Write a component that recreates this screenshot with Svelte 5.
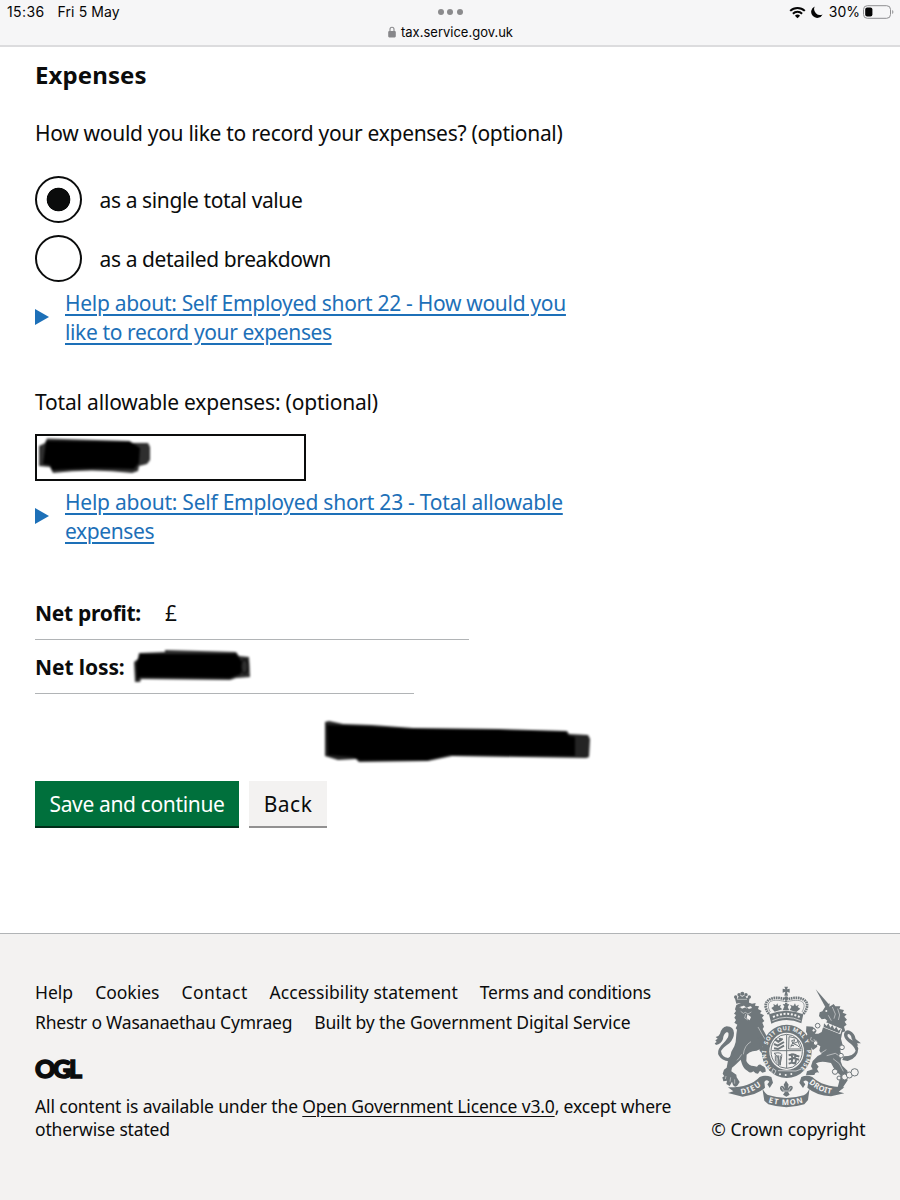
<script lang="ts">
  interface FooterLink {
    id: string;
    text: string;
  }

  const linkRows: FooterLink[][] = [
    [
      { id: 'to-help', text: 'Help' },
      { id: 'to-cookies', text: 'Cookies' },
      { id: 'to-contact', text: 'Contact' },
      { id: 'to-accessibility', text: 'Accessibility statement' },
      { id: 'to-terms', text: 'Terms and conditions' },
    ],
    [
      { id: 'to-welsh', text: 'Rhestr o Wasanaethau Cymraeg' },
      { id: 'to-gds', text: 'Built by the Government Digital Service' },
    ],
  ];

  const options = [
    { value: 'total', label: 'as a single total value' },
    { value: 'detail', label: 'as a detailed breakdown' },
  ];
  let selected = $state('total');
</script>

<div class="screen">
  <header class="chrome">
    <div class="clock"><span>15:36</span><span>Fri 5 May</span></div>
    <div class="address">
      <div class="dots"><i></i><i></i><i></i></div>
      <div class="host">
        <svg width="8" height="12" viewBox="0 0 8 12" aria-hidden="true">
          <path d="M2 6V3.2a2 2 0 0 1 4 0V6" fill="none" stroke="#87878a" stroke-width="1.1" />
          <rect x="0.2" y="5" width="7.6" height="6.4" rx="1.1" fill="#87878a" />
        </svg>
        <span>tax.service.gov.uk</span>
      </div>
    </div>
    <div class="status">
      <svg width="17" height="13" viewBox="0 0 17 13" aria-hidden="true">
        <g fill="none" stroke="#050505" stroke-width="2">
          <path d="M1.2 4.9a10.4 10.4 0 0 1 14.6 0" />
          <path d="M3.9 7.7a6.5 6.5 0 0 1 9.2 0" />
        </g>
        <path d="M8.5 12.2 5.9 9.7a3.8 3.8 0 0 1 5.2 0z" fill="#050505" />
      </svg>
      <svg class="moon" width="12" height="12" viewBox="0 0 12 12" aria-hidden="true">
        <path d="M3.7.4a6 6 0 1 0 7.900 8A6 6 0 0 1 3.700.4z" fill="#050505" />
      </svg>
      <span>30%</span>
      <svg class="battery" width="31" height="14" viewBox="0 0 31 14" aria-hidden="true">
        <rect x="0.5" y="0.7" width="27" height="12.6" rx="3.8" fill="none" stroke="#8e8e90" />
        <rect x="2.2" y="2.4" width="7.2" height="9.2" rx="2" fill="#050505" />
        <path d="M29 5v4q1.5-.6 1.5-2T29 5z" fill="#a4a4a6" />
      </svg>
    </div>
  </header>

  <main>
    <h1>Expenses</h1>
    <p class="question">How would you like to record your expenses? (optional)</p>

    <div class="radios">
      {#each options as option (option.value)}
        <label class="radio">
          <input type="radio" name="expenses" value={option.value} bind:group={selected} />
          <span>{option.label}</span>
        </label>
      {/each}
    </div>

    <div class="help">
      <svg width="14" height="16" viewBox="0 0 14 16" aria-hidden="true"><path d="M0 0 14 8 0 16z" fill="#1d70b8" /></svg>
      <a href="#help-22">Help about: Self Employed short 22 - How would you<br /><span class="tail">like to record your expenses</span></a>
    </div>

    <p class="total-label">Total allowable expenses: (optional)</p>
    <div class="amount">
      <input type="text" aria-label="Total allowable expenses" />
      <svg class="scribble amount-mark" width="120" height="42" viewBox="0 0 120 42" aria-hidden="true">
        <path d="M3 12 9 9 11 4.500 94 7 95 9 112 9 114 13 114 26 111 30 103 32 102 37 96 39Q55 34 17 39L14 33 3 32Z" opacity="0.82" />
        <path d="M10 7 95 8 104 14 103 29 98 35Q55 33 16 36L14 31 7 30Z" />
      </svg>
    </div>

    <div class="help second">
      <svg width="14" height="16" viewBox="0 0 14 16" aria-hidden="true"><path d="M0 0 14 8 0 16z" fill="#1d70b8" /></svg>
      <a href="#help-23">Help about: Self Employed short 23 - Total allowable<br /><span class="tail">expenses</span></a>
    </div>

    <div class="net profit"><strong>Net profit:</strong><span>£</span></div>
    <div class="net loss">
      <strong>Net loss:</strong>
      <svg class="scribble loss-mark" width="120" height="36" viewBox="0 0 120 36" aria-hidden="true">
        <path d="M2 14 6 11 7 5 33 4 33 2 104 4 107 8 117 9 118 29 104 30 98 32 9 31 8 34 3 34Z" opacity="0.82" />
        <path d="M8 6 104 6 107 10 109 12 109 26 98 30 8 29 5 32 4 16Z" />
        <ellipse cx="112.600" cy="18.500" rx="3.600" ry="7" fill="none" stroke="#000" stroke-width="1.200" />
      </svg>
    </div>

    <div class="actions">
      <button class="save">Save and continue</button>
      <button class="back">Back</button>
      <svg class="scribble wide-mark" width="272" height="46" viewBox="0 0 272 46" aria-hidden="true">
        <path d="M2 3 6 2 20 5 49 6 90 9 176 10 244 12 246 15 265 16 267 20 266 38 263 39 129 37 105 42 36 43 33 40 15 41 2 37Z" opacity="0.86" />
        <path d="M4 6 30 7 90 10 176 11 242 13 246 17 252 18 252 37 126 36 104 41 37 41 30 38 5 36Z" />
      </svg>
    </div>
  </main>

  <footer>
    <div class="meta">
      {#each linkRows as row}
        <ul class="links">
          {#each row as link (link.id)}
            <li class={link.id}>{link.text}</li>
          {/each}
        </ul>
      {/each}
      <div class="ogl">OGL</div>
      <p class="licence">
        All content is available under the <a href="#ogl">Open Government Licence v3.0</a>, except where<br />otherwise stated
      </p>
    </div>

    <div class="crown">
      <!-- Royal coat of arms -->
      <svg width="153" height="125" viewBox="36 35 459 375" aria-hidden="true">
        <defs>
          <path id="garter" d="M203 212A60 62 0 0 1 320 222" />
          <path id="garter-left" d="M215 281A60 62 0 0 1 201 219" />
          <path id="garter-right" d="M320 227A60 62 0 0 1 296 286" />
          <path id="scroll-l" d="M124 360Q158 356 190 329" />
          <path id="scroll-m" d="M205 384Q258 400 313 384" />
          <path id="scroll-r" d="M326 326Q356 354 396 359" />
        </defs>

        <!-- lion -->
        <g fill="#6f777b">
          <path d="M109 88 104 69 113 73 117 63 127 67 135 63 140 72 149 67 146 91Q127 83 109 88Z" />
          <circle cx="107" cy="68" r="5" /><circle cx="117" cy="61" r="5" /><circle cx="127" cy="58" r="6" /><circle cx="138" cy="61" r="5" /><circle cx="148" cy="68" r="5" />
          <path d="M109 92Q132 78 156 88L167 86 165 94 177 96 174 104 185 110 180 117 192 123 186 130 193 140 187 145 192 157 188 164Q198 180 204 195L200 211Q188 211 181 224Q170 231 158 231Q148 234 140 241L139 260Q146 275 161 275L171 277Q178 266 186 274Q198 277 197 292L187 295 180 289 174 298 167 297 160 291Q151 299 143 290Q131 284 126 269L122 256 105 273 96 280 94 291 109 301 110 309 119 323 113 333Q106 342 99 332L96 322 89 335 79 329 81 319 70 321 67 309 73 306 68 298 72 286 80 280Q81 260 91 244L94 232 103 216 107 203 109 180 111 166 107 162 112 151 103 145 108 137 103 130 108 122 102 118 108 110 105 105Z" />
          <path d="M108 210Q101 241 96 252L87 261Q65 258 57 244Q49 232 63 214Q77 202 84 189Q89 171 79 174Q70 180 69 194Q64 209 48 212L44 207 50 203 46 198 53 193 47 188Q57 186 60 178Q65 159 80 156Q101 157 102 176Q102 193 88 207Q69 220 63 230Q65 248 84 251Q96 246 100 226Z" />
          <path d="M171 190 190 185 207 193 216 206 205 212 190 207 180 200ZM177 207 193 226 199 238 191 242 179 229Z" />
        </g>
        <g fill="none" stroke="#f3f2f1" stroke-width="1.5">
          <path d="M119 99 132 95 139 101 152 97M122 111 130 117 136 114 144 119 154 113M137 119 134 131 144 137M174 158Q185 178 201 204M130 240Q133 213 153 202M111 258Q118 252 125 240M111 75 141 75M92 309 90 322M104 315 104 328M78 305 76 314" />
        </g>
        <path d="M142 120 153 128 149 138 140 132ZM121 98 132 94 137 99 126 103ZM143 99 153 96 156 101 146 104Z" fill="#f3f2f1" />

        <!-- crown -->
        <g fill="#6f777b">
          <path d="M253 37H264L261 45 269 43V55L261 52 264 64H253L256 52 248 55V43L256 45Z" />
          <circle cx="258.5" cy="72" r="6" />
          <path d="M207 120Q259 99 310 120L304 147Q258 126 214 148Z" />
          <path d="M224 112 214 101 222 96 220 89 228 93 232 87 235 95 243 91 240 99 247 105ZM269 107 274 98 270 91 280 95 285 87 288 95 297 91 293 98 301 103 289 113ZM248 108 253 96 248 90 258 89 268 90 263 98 268 108Z" />
        </g>
        <g fill="none" stroke="#6f777b">
          <path d="M207 119C178 80 217 61 255 75M310 119C341 80 303 61 262 75" stroke-width="8" stroke-dasharray="5 2" />
          <path d="M211 113C191 79 221 72 255 82M306 113C325 80 299 72 262 82" stroke-width="2" />
          <path d="M258.5 78V103" stroke-width="7" stroke-dasharray="5 2" />
        </g>
        <path d="M219 128Q259 109 299 128" fill="none" stroke="#f3f2f1" stroke-width="6" stroke-dasharray="6 5" />
        <path d="M217 139Q259 119 302 139" fill="none" stroke="#f3f2f1" stroke-width="2" />

        <!-- unicorn -->
        <g fill="#6f777b">
          <path d="M347 45 388 91 376 98Z" />
          <path d="M367 111 377 95 389 87 388 97 401 89 406 96 421 96 418 104 432 107 428 115 440 120 433 127 441 136 434 142 440 151 432 157 436 171 427 174 423 193 428 213 421 228 424 245 422 261 427 274 443 290 438 306 443 318 434 331 426 343 413 339 417 324 421 303 404 286 393 266 377 263Q357 261 348 267L356 277 351 284 357 295Q345 291 343 302L318 303 321 291 338 285 333 276 338 260 353 245 365 239 358 229 361 216 354 211 351 199 340 195 349 207 352 217 339 227 325 209 324 195 312 192 322 181 319 169 337 178 355 178 365 173 370 156 382 139 375 133 365 135 357 125 359 114Z" />
          <path d="M319 156 338 157 350 169 344 180 331 180 318 174Z" />
          <path d="M431 246Q461 246 467 229Q463 215 445 203Q431 192 432 179Q436 165 449 169Q465 177 467 194L483 207 471 207 475 214 463 211Q461 200 455 193Q453 179 444 179Q439 185 449 193Q469 203 475 222Q474 252 443 260L427 257Z" />
        </g>
        <g fill="none" stroke="#f3f2f1" stroke-width="1.6">
          <path d="M397 98 406 119 402 133M413 103 419 122 415 137M385 123 394 139M362 237 379 226M380 244 406 237 421 247M399 253 418 268 430 291M333 199 344 202M334 188 331 198" />
        </g>
        <path d="M371 141 426 164 421 180 368 159Z" fill="#f3f2f1" />
        <path d="M372 147 380 155 385 147 391 160 397 152 403 165 409 157 415 169 423 163 418 177 371 158Z" fill="#6f777b" />
        <circle cx="379" cy="110" r="3" fill="#f3f2f1" />
        <g fill="#f3f2f1" stroke="#6f777b" stroke-width="3">
          <circle cx="353" cy="154" r="7" /><circle cx="341" cy="168" r="5" /><circle cx="347" cy="206" r="7" /><circle cx="426" cy="219" r="7" /><circle cx="423" cy="244" r="7" />
          <circle cx="405" cy="292" r="8" /><circle cx="417" cy="311" r="6" /><circle cx="434" cy="308" r="9" /><circle cx="448" cy="302" r="9" /><circle cx="464" cy="294" r="11" />
        </g>

        <!-- garter and shield -->
        <ellipse cx="260" cy="231" rx="75" ry="80" fill="#6f777b" />
        <ellipse cx="260" cy="231" rx="52" ry="56" fill="#f3f2f1" />
        <g class="motto">
          <text><textPath href="#garter" textLength="152">SOIT QUI MAL Y</textPath></text>
          <text><textPath href="#garter-left" textLength="56">HONI</textPath></text>
          <text><textPath href="#garter-right" textLength="60">PENSE</textPath></text>
        </g>
        <g fill="none" stroke="#6f777b">
          <ellipse cx="260" cy="231" rx="47" ry="51" stroke-width="3" />
          <path d="M260 181V281M216 229H304" stroke-width="3" />
          <path d="M225 195 235 202 248 193M222 209 233 214 252 203M222 222 234 224 252 214M238 191 244 200M266 243 279 240 298 247M266 256 280 251 297 256M266 268 276 265 288 268M273 238 277 250M287 239 285 249M277 252 275 263M288 257 286 267" stroke-width="6" />
          <path d="M267 187 290 192 303 224 266 224ZM272 219 278 206 275 199 284 196 280 208 292 213 298 219M280 208 296 201M272 213 282 214" stroke-width="3" />
          <path d="M222 237Q249 231 245 247L240 272Q239 248 222 237M226 243V261M231 242V268M236 243V272M241 244V273" stroke-width="3" />
        </g>
        <g fill="none" stroke="#f3f2f1" stroke-width="2">
          <path d="M219 283 228 289 222 301 215 294ZM234 289 288 290 304 284" />
        </g>
        <g fill="#f3f2f1"><circle cx="240" cy="300" r="3" /><circle cx="257" cy="302" r="3" /><circle cx="274" cy="299" r="3" /></g>

        <!-- scroll -->
        <g fill="#6f777b">
          <path d="M84 339Q150 340 179 308Q195 300 214 308L219 325 209 341 202 330 208 322Q198 313 193 323L195 340Q174 361 128 367L84 356 100 351Z" />
          <path d="M433 339Q367 338 337 308Q320 300 304 308L298 325 309 341 316 330 310 322Q319 314 325 324L322 340Q348 363 393 366L433 357 416 352Z" />
          <path d="M187 342Q197 362 207 363Q259 379 311 363Q322 359 329 341L324 377 313 390Q259 407 205 390L193 379Z" />
          <path d="M258 319 266 331 263 343Q270 329 278 337Q280 345 270 352H264L269 361 259 367 249 361 255 352H247Q237 345 241 337Q248 329 255 343L251 331Z" />
        </g>
        <path d="M248 350H270M245 339 250 347M273 339 267 347" stroke="#f3f2f1" stroke-width="2" fill="none" />
        <g class="motto scroll">
          <text><textPath href="#scroll-l" textLength="66">DIEU</textPath></text>
          <text><textPath href="#scroll-m" textLength="106">ET MON</textPath></text>
          <text><textPath href="#scroll-r" textLength="76">DROIT</textPath></text>
        </g>
      </svg>
      <span>© Crown copyright</span>
    </div>
  </footer>
</div>

<style>
  :global(body) {
    background: #fff;
  }
  .screen {
    display: flex;
    flex-direction: column;
    width: 900px;
    height: 1200px;
    overflow: hidden;
    font-family: 'Noto Sans', sans-serif;
    font-size: 21px;
    color: #0b0c0c;
    white-space: nowrap;
  }
  .chrome {
    box-sizing: border-box;
    height: 47px;
    display: grid;
    grid-template-columns: 1fr 200px 1fr;
    background: #f6f6f7;
    border-bottom: 2px solid #dcdcde;
    font-family: Inter, sans-serif;
    font-size: 14px;
    line-height: 24px;
    color: #050505;
  }
  .clock {
    display: flex;
    gap: 13px;
    padding-left: 7px;
    letter-spacing: 0.1px;
  }
  .clock span:first-child {
    letter-spacing: 0.4px;
  }
  .address {
    display: flex;
    flex-direction: column;
    align-items: center;
  }
  .dots {
    display: flex;
    gap: 3.5px;
    height: 22px;
    padding-top: 9px;
    box-sizing: border-box;
  }
  .dots i {
    width: 6px;
    height: 6px;
    border-radius: 50%;
    background: #8b8b8d;
  }
  .host {
    display: flex;
    align-items: center;
    gap: 5px;
    padding-left: 1px;
    line-height: 20px;
    font-size: 13px;
  }
  .status {
    display: flex;
    justify-content: flex-end;
    align-items: center;
    height: 24px;
    padding-right: 6px;
  }
  .status .moon {
    margin: 0 6px 0 5px;
  }
  .status .battery {
    margin-left: 3px;
  }
  main {
    box-sizing: border-box;
    height: 886px;
    padding: 13px 35px 0;
  }
  h1 {
    margin: 0;
    font-size: 24px;
    line-height: 30px;
    font-weight: 700;
    letter-spacing: 0.1px;
  }
  p {
    margin: 0;
    line-height: 30px;
  }
  .question {
    margin-top: 28px;
    letter-spacing: -0.3px;
  }
  .radios {
    display: flex;
    flex-direction: column;
    gap: 12px;
    margin-top: 28px;
    letter-spacing: -0.39px;
  }
  .radio {
    display: flex;
    align-items: center;
    gap: 17.5px;
    height: 47px;
  }
  .radio input {
    appearance: none;
    box-sizing: border-box;
    width: 47px;
    height: 47px;
    margin: 0;
    border: 2.4px solid #0b0c0c;
    border-radius: 50%;
  }
  .radio input:checked {
    background: radial-gradient(circle, #0b0c0c 11.4px, #fff 12.2px);
  }
  .help {
    display: flex;
    align-items: center;
    gap: 16px;
    margin-top: 6.5px;
    line-height: 29.3px;
    letter-spacing: -0.3px;
  }
  .help.second {
    letter-spacing: -0.24px;
  }
  .help svg {
    position: relative;
    top: -1px;
  }
  .help a {
    color: #1d70b8;
    text-decoration-thickness: 1.5px;
    text-underline-offset: 3px;
  }
  .help .tail {
    letter-spacing: -0.38px;
  }
  .total-label {
    margin-top: 40px;
    letter-spacing: -0.18px;
  }
  .amount {
    position: relative;
    width: 271px;
    height: 47px;
    margin-top: 17px;
  }
  .amount input {
    box-sizing: border-box;
    width: 100%;
    height: 100%;
    border: 2.4px solid #0b0c0c;
    background: #fff;
    font: inherit;
  }
  .scribble {
    position: absolute;
    filter: blur(0.8px);
  }
  .amount-mark {
    left: 1px;
    top: 0;
  }
  .net {
    box-sizing: border-box;
    position: relative;
    line-height: 30px;
    border-bottom: 1px solid #b1b4b6;
  }
  .profit {
    display: flex;
    gap: 24px;
    width: 434px;
    height: 42px;
    margin-top: 52px;
    letter-spacing: -0.27px;
  }
  .loss {
    width: 379px;
    height: 54px;
    padding-top: 12px;
    letter-spacing: -0.1px;
  }
  .loss-mark {
    left: 97px;
    top: 8px;
  }
  .actions {
    position: relative;
    display: flex;
    gap: 10px;
    margin-top: 87px;
  }
  .wide-mark {
    left: 288px;
    top: -62px;
  }
  button {
    height: 47px;
    padding: 0;
    border: 0;
    font: inherit;
    line-height: 45px;
  }
  .save {
    width: 204px;
    background: #00703c;
    color: #fff;
    box-shadow: inset 0 -2px 0 #002d18;
    letter-spacing: -0.35px;
  }
  .back {
    width: 78px;
    background: #f3f2f1;
    color: #0b0c0c;
    box-shadow: inset 0 -2px 0 #929191;
    letter-spacing: 0.5px;
  }
  footer {
    flex: 1;
    display: flex;
    justify-content: space-between;
    padding: 44px 35px 0;
    background: #f3f2f1;
    border-top: 1px solid #b1b4b6;
    font-size: 17.5px;
  }
  .links {
    display: flex;
    gap: 22px;
    margin: 0;
    padding: 0;
    list-style: none;
    line-height: 29.5px;
  }
  .to-contact {
    letter-spacing: 0.4px;
  }
  .to-accessibility {
    letter-spacing: 0.04px;
  }
  .to-terms {
    letter-spacing: -0.28px;
  }
  .to-welsh {
    letter-spacing: -0.23px;
  }
  .to-gds {
    letter-spacing: -0.13px;
  }
  .ogl {
    height: 24px;
    margin-top: 19px;
    font: 900 25px/24px Lato, sans-serif;
    letter-spacing: -2.2px;
    -webkit-text-stroke: 1.4px #0b0c0c;
  }
  .licence {
    margin-top: 15px;
    line-height: 23.4px;
    letter-spacing: -0.15px;
  }
  .licence a {
    color: inherit;
    text-underline-offset: 3px;
  }
  .crown {
    display: flex;
    flex-direction: column;
    align-items: center;
    gap: 6px;
    width: 153px;
    padding-top: 8px;
    line-height: 24px;
  }
  .motto {
    font: 700 17px 'Noto Sans', sans-serif;
    fill: #f3f2f1;
  }
  .motto.scroll {
    font-size: 23px;
  }
</style>
